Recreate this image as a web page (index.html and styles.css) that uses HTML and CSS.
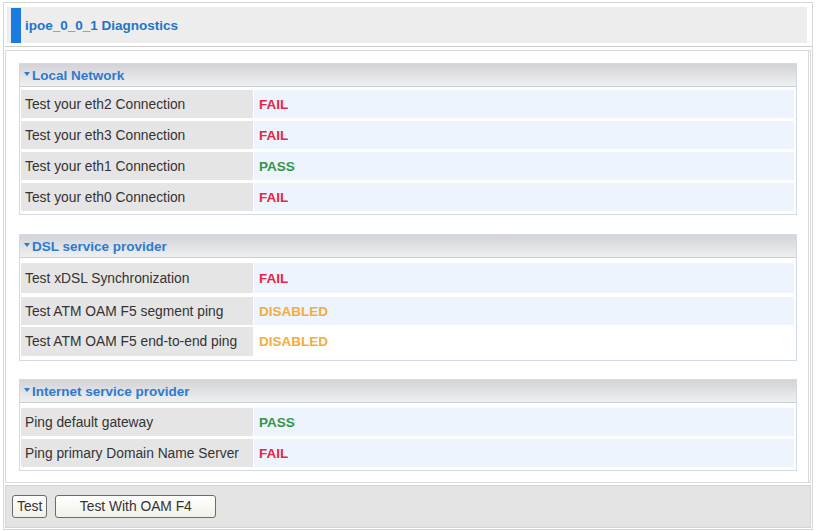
FILE: index.html
```html
<!DOCTYPE html>
<html>
<head>
    <meta charset="UTF-8">
    <title>ipoe_0_0_1 Diagnostics</title>
    <link rel="stylesheet" href="styles.css">
</head>
<body>
    <div class="page">
        <div class="page-title">
            <span class="title-mark"></span>
            <span class="title-text">ipoe_0_0_1 Diagnostics</span>
        </div>
        <div class="title-rule"></div>

        <div class="panel">
            <div class="section lan">
                <div class="section-head"><span class="arrow"></span>Local Network</div>
                <div class="row"><div class="label">Test your eth2 Connection</div><div class="value fail">FAIL</div></div>
                <div class="row"><div class="label">Test your eth3 Connection</div><div class="value fail">FAIL</div></div>
                <div class="row"><div class="label">Test your eth1 Connection</div><div class="value pass">PASS</div></div>
                <div class="row"><div class="label">Test your eth0 Connection</div><div class="value fail">FAIL</div></div>
            </div>

            <div class="section dsl">
                <div class="section-head"><span class="arrow"></span>DSL service provider</div>
                <div class="row tall"><div class="label">Test xDSL Synchronization</div><div class="value fail">FAIL</div></div>
                <div class="row tight"><div class="label">Test ATM OAM F5 segment ping</div><div class="value disabled">DISABLED</div></div>
                <div class="row mid"><div class="label">Test ATM OAM F5 end-to-end ping</div><div class="value disabled plain">DISABLED</div></div>
            </div>

            <div class="section">
                <div class="section-head"><span class="arrow"></span>Internet service provider</div>
                <div class="row"><div class="label">Ping default gateway</div><div class="value pass">PASS</div></div>
                <div class="row"><div class="label">Ping primary Domain Name Server</div><div class="value fail">FAIL</div></div>
            </div>
        </div>

        <div class="button-bar">
            <button class="btn">Test</button>
            <button class="btn wide">Test With OAM F4</button>
        </div>
    </div>
</body>
</html>
```

FILE: styles.css
```css
body {
    margin: 0;
    background-color: #fff;
    font-family: "Liberation Sans", Arial, sans-serif;
    font-size: 13.5px;
    color: #333;
}

.page {
    margin: 2px 0 0 3px;
    width: 808px;
    height: 526px;
    border: 1px solid #d6d6d6;
}

.page-title {
    display: flex;
    align-items: center;
    height: 36px;
    margin: 4px 5px 0 3px;
    background-color: #ededed;
}

.title-mark {
    align-self: stretch;
    width: 10px;
    margin: 1px 4px 0 4px;
    background-color: #1b7be0;
}

.title-text {
    color: #2274c9;
    font-weight: bold;
}

.title-rule {
    margin: 3px 0 0 1px;
    height: 1px;
    background-color: #cbcbcb;
}

.panel {
    margin: 3px 1px 0 1px;
    height: 433px;
    padding: 12px 11px 0 13px;
    border: 1px solid #d9d9d9;
    border-right: 3px double #d9d9d9;
    box-sizing: border-box;
}

.section {
    border: 1px solid #d2dae4;
    padding-bottom: 3px;
    margin-bottom: 18px;
}

.section.lan {
    margin-bottom: 19px;
}

.section.dsl {
    padding-bottom: 4px;
}

.section-head {
    display: flex;
    align-items: center;
    height: 22px;
    padding-left: 4px;
    margin-bottom: 5px;
    border-bottom: 1px solid #c9cfd6;
    background: linear-gradient(#d3d3d8, #eef0f0);
    color: #2d7ad0;
    font-weight: bold;
}

.lan .section-head {
    margin-bottom: 3px;
}

.arrow {
    width: 0;
    height: 0;
    margin: 0 2px 2px 0;
    border-left: 3px solid transparent;
    border-right: 3px solid transparent;
    border-top: 4px solid #2d7ad0;
}

.row {
    display: flex;
    height: 28px;
    margin: 0 2px 3px 1px;
    font-size: 13.8px;
}

.row:last-child {
    margin-bottom: 0;
}

.row.tall {
    height: 30px;
    margin-bottom: 4px;
}

.row.tight {
    margin-bottom: 2px;
}

.row.mid {
    height: 29px;
}

.label {
    display: flex;
    align-items: center;
    width: 228px;
    padding-left: 4px;
    margin-right: 1px;
    background-color: #e5e5e5;
}

.value {
    display: flex;
    align-items: center;
    flex: 1;
    padding-left: 5px;
    background-color: #edf4fd;
    font-size: 13.5px;
    font-weight: bold;
}

.value.plain {
    background-color: #fff;
}

.fail {
    color: #e5263f;
}

.pass {
    color: #32964a;
}

.disabled {
    color: #f2ad3c;
}

.button-bar {
    display: flex;
    align-items: center;
    gap: 8px;
    margin: 2px 1px 0 1px;
    height: 43px;
    padding-left: 6px;
    border: 1px solid #d4d4d4;
    background-color: #e4e4e4;
    box-sizing: border-box;
}

.btn {
    height: 23px;
    padding: 0 4px;
    border: 1px solid #6b6b6b;
    border-radius: 3px;
    background: linear-gradient(#ffffff, #f1f1e8);
    font-family: "Liberation Sans", Arial, sans-serif;
    font-size: 13.8px;
    color: #333;
}

.btn.wide {
    width: 161px;
}
```
